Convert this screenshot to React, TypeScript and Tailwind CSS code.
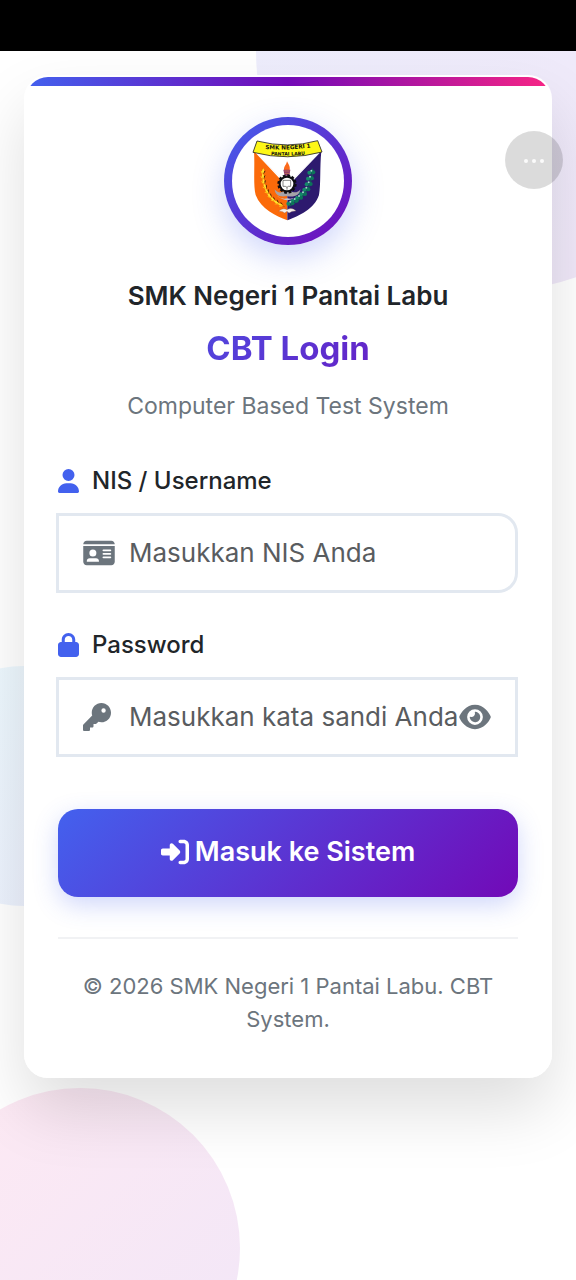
import { useState, type FormEvent } from 'react';
import { FaEye, FaEyeSlash, FaIdCard, FaKey, FaLock, FaRightToBracket, FaUser } from 'react-icons/fa6';

const SCHOOL_NAME = 'SMK Negeri 1 Pantai Labu';

// Leaves of the wreath, one side each: x, y, rotation
const PADDY = [
  [54, 125, 5], [54, 140, -5], [56, 155, -12], [60, 170, -22], [66, 184, -32],
  [74, 197, -42], [84, 208, -52], [95, 217, -60], [107, 224, -68],
];
const COTTON = [
  [199, 126], [195, 144], [191, 161], [184, 177], [174, 191], [162, 202], [149, 211], [136, 219],
];

const SchoolLogo = () => (
  <svg viewBox="-39 -15 336 336" className="size-full" role="img" aria-label={SCHOOL_NAME}>
    <path d="M27 64 L127 170 L127 271 C92 257 48 238 32 195 C24 165 30 110 27 64Z" fill="#fb6a0a" />
    <path d="M229 64 L127 170 L127 271 C162 257 208 238 222 195 C228 165 224 110 229 64Z" fill="#2d1a6e" />
    <path d="M30 64 L127 165 L226 64 Q128 88 30 64Z" fill="#fff" stroke="#e8e4ea" strokeWidth="1" />
    {/* Pita nama */}
    <path
      d="M36 33 Q128 57 218 32 L231 66 Q128 94 24 67Z"
      fill="#fdf716"
      stroke="#222"
      strokeWidth="2.5"
      strokeLinejoin="round"
    />
    <path id="ribbon-top" d="M44 56 Q128 63 214 50" fill="none" />
    <path id="ribbon-bottom" d="M58 73 Q128 81 200 72" fill="none" />
    <g fill="#111" fontFamily='"DejaVu Sans", sans-serif' fontWeight="700" textAnchor="middle">
      <text fontSize="17">
        <textPath href="#ribbon-top" startOffset="50%">SMK NEGERI 1</textPath>
      </text>
      <text fontSize="14">
        <textPath href="#ribbon-bottom" startOffset="50%">PANTAI LABU</textPath>
      </text>
    </g>
    {/* Obor */}
    <path d="M126 94 C130 103 136 108 134 120 H117 C116 108 124 106 126 94Z" fill="#fb6a1c" />
    <path d="M115 119 H136 L133 137 H119Z" fill="#8c356d" />
    <path d="M118 123 H134 M119 130 H133" stroke="#f0a83a" strokeWidth="1.5" />
    {/* Padi dan kapas */}
    <path d="M54 116 C50 165 68 210 119 230" fill="none" stroke="#9b5c00" strokeWidth="2" />
    {PADDY.map(([x, y, r]) => (
      <g key={y} transform={`translate(${x} ${y}) rotate(${r})`}>
        <path d="M0 -10 Q6 -3 0 8 Q-6 -3 0 -10Z" fill="#ffe52e" />
        <path d="M2 8 L8 -4 L3 -1Z" fill="#3a2600" />
        <path d="M-2 8 L-8 -3 L-3 0Z" fill="#ffd51a" />
      </g>
    ))}
    <path d="M203 116 C201 170 178 207 132 229" fill="none" stroke="#0b6b52" strokeWidth="3" />
    {COTTON.map(([x, y]) => (
      <g key={y}>
        <circle cx={x - 6} cy={y + 2} r="6" fill="#138a68" />
        <circle cx={x + 6} cy={y + 1} r="6" fill="#0c7459" />
        <circle cx={x} cy={y - 4} r="3" fill="#9fdcc8" />
      </g>
    ))}
    {/* Roda gigi dan buku */}
    <path d="M89 178 C90 198 108 202 125 198 C144 203 165 198 166 178 C159 190 145 188 137 184 L117 184 C108 190 95 188 89 178Z" fill="#a6a3a8" />
    <path d="M94 196 Q126 225 160 196 Q145 210 127 205 Q110 210 94 196Z" fill="#c7c4c9" />
    <circle cx="126" cy="162" r="25" fill="none" stroke="#0d0d12" strokeWidth="8" strokeDasharray="8 5.1" />
    <circle cx="126" cy="162" r="22" fill="#fff" stroke="#0d0d12" strokeWidth="6" />
    <path d="M114 151 H137 V169 H130 L126 172 L121 169 H114Z" fill="#fff" stroke="#333" strokeWidth="1.8" />
    <path d="M126 172 V179" stroke="#333" strokeWidth="2" />
    <path d="M101 244 Q112 232 126 239 Q141 231 153 243 Q141 242 132 249 L126 244 L119 249 Q112 242 101 244Z" fill="#f6efe9" stroke="#8b6a5e" strokeWidth="1" />
  </svg>
);

export default function App() {
  const [username, setUsername] = useState('');
  const [password, setPassword] = useState('');
  const [showPassword, setShowPassword] = useState(false);

  const handleSubmit = (e: FormEvent) => {
    e.preventDefault();
  };

  return (
    <div className="relative flex min-h-screen flex-col bg-white font-[Inter,sans-serif] text-[#212529]">
      <div className="h-[51px] shrink-0 bg-black" />

      <main className="relative flex flex-1 flex-col overflow-hidden px-6 pt-6 pb-12">
        {/* Lingkaran dekorasi latar */}
        <div className="absolute -top-60 -right-40 size-[480px] rounded-full bg-[linear-gradient(135deg,#4361ee,#7209b7)] opacity-10" />
        <div className="absolute -bottom-32 -left-20 size-80 rounded-full bg-[linear-gradient(135deg,#f72585,#7209b7)] opacity-10" />
        <div className="absolute top-1/2 -left-24 size-60 rounded-full bg-[linear-gradient(135deg,#4cc9f0,#4361ee)] opacity-10" />

        <div className="relative mx-auto w-full max-w-2xl overflow-hidden rounded-3xl border-2 border-white/20 bg-white/98 shadow-[0_32px_64px_rgba(0,0,0,0.13)]">
          <div className="h-[9px] bg-[linear-gradient(90deg,#4361ee,#7209b7,#f72585)]" />

          <div className="px-8 pt-[31px] pb-10">
            <header className="flex flex-col items-center text-center">
              <div className="size-32 rounded-full bg-[linear-gradient(135deg,#4361ee,#7209b7)] p-2 shadow-[0_12px_32px_rgba(67,97,238,0.25)]">
                <div className="size-full overflow-hidden rounded-full bg-white">
                  <SchoolLogo />
                </div>
              </div>
              <h1 className="mt-[35px] text-[26px] leading-8 font-semibold">{SCHOOL_NAME}</h1>
              <h2 className="mt-4 w-full bg-[linear-gradient(135deg,#4361ee,#7209b7)] bg-clip-text text-[33px] leading-10 font-bold text-transparent">
                CBT Login
              </h2>
              <p className="mt-[22px] text-[23px] leading-8 text-[#6c757d]">Computer Based Test System</p>
            </header>

            <form onSubmit={handleSubmit} className="mt-[43px]">
              <label htmlFor="nis" className="flex items-center gap-[13px] text-[24px] leading-8 font-medium">
                <FaUser className="h-6 w-[21px] text-[#4361ee]" />
                NIS / Username
              </label>
              <div className="mt-4 -ml-0.5 flex h-20 items-center rounded-r-[20px] border-3 border-[#e2e8f0] bg-white px-6">
                <FaIdCard className="h-7 w-8 shrink-0 text-[#6c757d]" />
                <input
                  id="nis"
                  type="text"
                  value={username}
                  onChange={(e) => setUsername(e.target.value)}
                  placeholder="Masukkan NIS Anda"
                  className="ml-[14px] w-full min-w-0 flex-1 bg-transparent text-[26px] leading-10 outline-none placeholder:text-[#595c5f]"
                />
              </div>

              <label htmlFor="password" className="mt-9 flex items-center gap-[13px] text-[24px] leading-8 font-medium">
                <FaLock className="h-6 w-[21px] text-[#4361ee]" />
                Password
              </label>
              <div className="mt-4 -ml-0.5 flex h-20 items-center border-3 border-[#e2e8f0] bg-white px-6">
                <FaKey className="mr-1 size-7 shrink-0 text-[#6c757d]" />
                <input
                  id="password"
                  type={showPassword ? 'text' : 'password'}
                  value={password}
                  onChange={(e) => setPassword(e.target.value)}
                  placeholder="Masukkan kata sandi Anda"
                  className="ml-[14px] w-full min-w-0 flex-1 bg-transparent text-[26px] leading-10 outline-none placeholder:text-[#595c5f]"
                />
                <button
                  type="button"
                  onClick={() => setShowPassword((v) => !v)}
                  aria-label="Tampilkan kata sandi"
                  className="shrink-0 text-[#6c757d]"
                >
                  {showPassword ? <FaEyeSlash className="h-7 w-8" /> : <FaEye className="h-7 w-8" />}
                </button>
              </div>

              <button
                type="submit"
                className="mt-[52px] flex h-[88px] w-full items-center justify-center gap-[6px] rounded-[20px] bg-[linear-gradient(135deg,#4361ee,#7209b7)] pb-[2px] text-[27px] font-semibold text-white shadow-[0_8px_24px_rgba(67,97,238,0.25)]"
              >
                <FaRightToBracket className="size-7" />
                Masuk ke Sistem
              </button>
            </form>

            <footer className="mt-10 border-t-2 border-[#f1f2f4] pt-[31px] text-center text-[22px] leading-[33px] text-[#6c757d]">
              {`© 2026 ${SCHOOL_NAME}. CBT System.`}
            </footer>
          </div>
        </div>
      </main>

      {/* Tombol melayang */}
      <button
        type="button"
        aria-label="Menu"
        className="absolute top-[131px] right-[13px] flex size-[58px] items-center justify-center gap-1 rounded-full bg-black/14 pt-[2px]"
      >
        <span className="size-1 rounded-full bg-white/90" />
        <span className="size-1 rounded-full bg-white/90" />
        <span className="size-1 rounded-full bg-white/90" />
      </button>
    </div>
  );
}
